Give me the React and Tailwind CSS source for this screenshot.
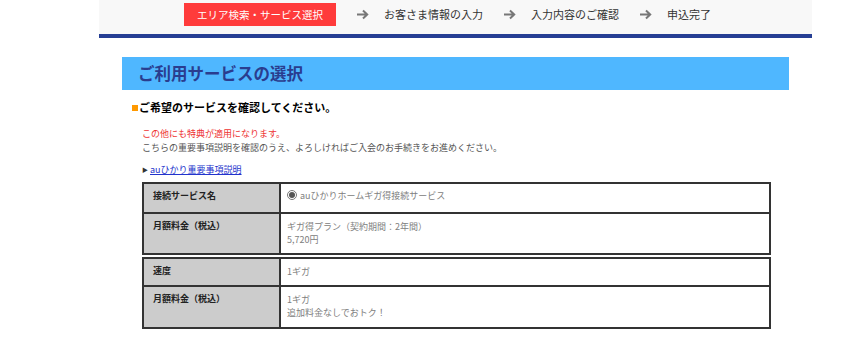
import React from 'react';

const font = { fontFamily: '"Noto Sans CJK JP", "Noto Sans", sans-serif' };

const steps = ['お客さま情報の入力', '入力内容のご確認', '申込完了'];

const Arrow = () => (
  <svg width="13" height="11" viewBox="0 0 13 11" className="ml-[20px] mr-[15px]">
    <path d="M1 5.5H11M7 1.5L11.2 5.5L7 9.5" fill="none" stroke="#777" strokeWidth="2" />
  </svg>
);

const Row = ({ label, children, h, last }) => (
  <div className={`flex ${last ? '' : 'border-b-2 border-[#333]'}`}>
    <div className={`w-[137px] shrink-0 bg-[#cccccc] border-r-2 border-[#333] pl-[9px] pt-[5px] text-[9px] font-bold text-[#222] ${h}`}>
      {label}
    </div>
    <div className="flex-1 pl-[6px] pt-[6px] text-[9px] leading-[13px] text-[#808080]">{children}</div>
  </div>
);

export default function App() {
  return (
    <div className="w-[866px] h-[353px] bg-white overflow-hidden" style={font}>
      <div className="ml-[99px] w-[713px] h-[38px] bg-[#f8f8f8] border-b-4 border-[#263f94] flex items-start">
        <div className="ml-[85px] mt-[3px] w-[152px] h-[23px] bg-[#ff3b3b] text-white text-[10.5px] flex items-center justify-center">
          エリア検索・サービス選択
        </div>
        {steps.map((s) => (
          <div key={s} className="flex items-center h-[29px] text-[11px] text-[#333]">
            <Arrow />
            <span>{s}</span>
          </div>
        ))}
      </div>

      <div className="ml-[122px] w-[667px] mt-[19px]">
        <div className="h-[33px] bg-[#4fb7ff] pl-[16px] flex items-center text-[16.5px] font-bold text-[#2a3d8f]">
          ご利用サービスの選択
        </div>

        <div className="mt-[9px] pl-[10px] flex items-center text-[11px] font-bold text-black">
          <span className="inline-block w-[6px] h-[6px] bg-[#ff9900] mr-[1px] mt-[2px]"></span>
          ご希望のサービスを確認してください。
        </div>

        <div className="ml-[20px] mt-[11px] text-[9px] leading-[14px]">
          <p className="text-[#ee3333]">この他にも特典が適用になります。</p>
          <p className="text-[#555]">こちらの重要事項説明を確認のうえ、よろしければご入会のお手続きをお進めください。</p>
          <p className="mt-[8px] flex items-center">
            <span className="text-[6px] text-[#333] mr-[2px]">▶</span>
            <a href="#" className="text-[#2233cc] underline">auひかり重要事項説明</a>
          </p>
        </div>

        <div className="ml-[20px] w-[629px] mt-[5px]">
          <div className="border-2 border-[#333]">
            <Row label="接続サービス名" h="h-[28px]">
              <span className="flex items-center gap-[3px] -mt-[1px]">
                <span className="inline-flex items-center justify-center w-[10px] h-[10px] rounded-full border border-[#777] bg-white">
                  <span className="w-[6px] h-[6px] rounded-full bg-[#555]"></span>
                </span>
                auひかりホームギガ得接続サービス
              </span>
            </Row>
            <Row label="月額料金（税込）" h="h-[39px]" last>
              <p>ギガ得プラン（契約期間：2年間）</p>
              <p>5,720円</p>
            </Row>
          </div>
          <div className="border-2 border-[#333] mt-[2px]">
            <Row label="速度" h="h-[26px]">
              <p>1ギガ</p>
            </Row>
            <Row label="月額料金（税込）" h="h-[40px]" last>
              <p>1ギガ</p>
              <p>追加料金なしでおトク！</p>
            </Row>
          </div>
        </div>
      </div>
    </div>
  );
}
